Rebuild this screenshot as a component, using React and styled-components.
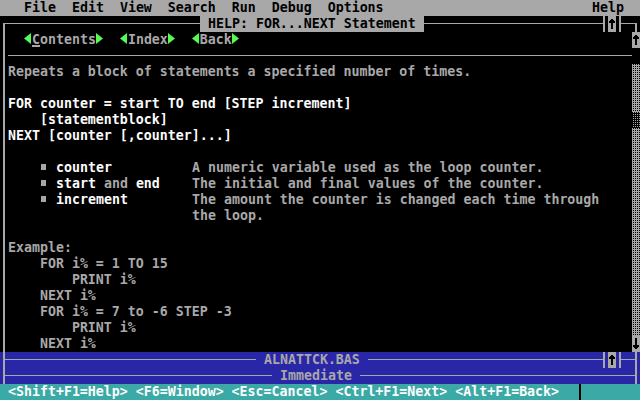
import React from 'react';
import styled, { createGlobalStyle } from 'styled-components';

const GRAY = '#a8a8a8';
const WHITE = '#fcfcfc';
const GREEN = '#54fc54';
const BLUE = '#2a26a8';
const TEAL = '#3ba9a6';

const GlobalStyle = createGlobalStyle`
  html, body {
    margin: 0;
    padding: 0;
    background: #000;
  }
  body {
    font-family: "DejaVu Sans Mono", "Liberation Mono", monospace;
    font-size: 13.288px;
    font-weight: bold;
    line-height: 16px;
  }
`;

// one line segment of a box-drawing character inside an 8x16 cell
const seg = (c, x, y, w, h) => `linear-gradient(${c}, ${c}) ${x}px ${y}px / ${w}px ${h}px no-repeat`;

const boxLayers = ({ $u, $d, $l, $r, $c = GRAY }) => {
  const layers = [];
  if ($u) layers.push(seg($c, 3, 0, 2, 8));
  if ($d) layers.push(seg($c, 3, 7, 2, 9));
  if ($l) layers.push(seg($c, 0, 7, 5, 1));
  if ($r) layers.push(seg($c, 3, 7, 5, 1));
  return layers.length ? layers.join(', ') : 'none';
};

const Screen = styled.div`
  width: 640px;
  height: 400px;
  display: flex;
  flex-direction: column;
  background: #000;
  overflow: hidden;
`;

const MenuBar = styled.div`
  height: 16px;
  display: flex;
  justify-content: space-between;
  padding: 0 16px 0 24px;
  background: ${GRAY};
  color: #000;
`;

const MenuGroup = styled.div`
  display: flex;
  gap: 16px;
`;

const Row = styled.div`
  height: 16px;
  display: flex;
  flex-shrink: 0;
  background: ${p => p.$bg || 'transparent'};
  color: ${p => p.$fg || GRAY};
  white-space: pre;
`;

const BoxCell = styled.div`
  width: 8px;
  height: 16px;
  flex-shrink: 0;
  background: ${boxLayers};
`;

const HLine = styled.div`
  height: 16px;
  flex: ${p => (p.$w ? `0 0 ${p.$w}px` : '1')};
  background: ${seg(GRAY, 0, 7, '100%', 1).replace('100%px', '100%')};
`;

const Title = styled.span`
  white-space: pre;
  background: ${p => (p.$active ? GRAY : 'transparent')};
  color: ${p => (p.$active ? '#000' : GRAY)};
`;

const ArrowCell = styled.div`
  width: 8px;
  height: 16px;
  flex-shrink: 0;
  background: ${GRAY};
  svg {
    display: block;
  }
`;

const HelpWindow = styled.div`
  display: flex;
  flex-direction: column;
  height: 336px;
`;

const Body = styled.div`
  flex: 1;
  display: flex;
`;

const Edge = styled.div`
  width: 8px;
  background: linear-gradient(${GRAY}, ${GRAY}) 3px 0 / 2px 100% no-repeat;
`;

const Content = styled.div`
  flex: 1;
  display: flex;
  flex-direction: column;
`;

const Nav = styled.div`
  height: 16px;
  display: flex;
  gap: 16px;
  padding-left: 16px;
`;

const NavLink = styled.span`
  display: flex;
  color: ${GRAY};
  svg {
    display: block;
  }
`;

const Cursor = styled.span`
  background: linear-gradient(${GRAY}, ${GRAY}) 0 13px / 100% 2px no-repeat;
`;

const Line = styled.div`
  height: 16px;
  white-space: pre;
  color: ${p => (p.$bright ? WHITE : GRAY)};
`;

const Hi = styled.span`
  color: ${WHITE};
`;

const Term = styled.div`
  height: 16px;
  display: grid;
  grid-template-columns: 48px 136px 1fr;
  white-space: pre;
  color: ${GRAY};
`;

const Bullet = styled.span`
  background: ${p => (p.$on ? seg(GRAY, 33, 4, 5, 6) : 'none')};
`;

const ScrollBar = styled.div`
  width: 8px;
  display: flex;
  flex-direction: column;
`;

const Blank = styled.div`
  height: 16px;
`;

const Track = styled.div`
  height: ${p => p.$rows * 16}px;
  background: conic-gradient(#000 0 25%, ${GRAY} 0) 0 0 / 2px 2px;
`;

const Thumb = styled.div`
  height: 16px;
  background: conic-gradient(${GRAY} 0 25%, #000 0) 0 0 / 2px 2px;
`;

const StatusText = styled.span`
  width: 576px;
  white-space: pre;
`;

const Up = () => (
  <svg width="8" height="16" viewBox="0 0 8 16" shapeRendering="crispEdges">
    <path d="M3 3H5V4H6V5H7V7H5V13H3V7H1V5H2V4H3Z" fill="#000" />
  </svg>
);

const Down = () => (
  <svg width="8" height="16" viewBox="0 0 8 16" shapeRendering="crispEdges">
    <path d="M3 2H5V9H7V11H6V12H5V13H3V12H2V11H1V9H3Z" fill="#000" />
  </svg>
);

const TriLeft = () => (
  <svg width="8" height="16" viewBox="0 0 8 16">
    <polygon points="0,6.5 7,1 7,12" fill={GREEN} />
  </svg>
);

const TriRight = () => (
  <svg width="8" height="16" viewBox="0 0 8 16">
    <polygon points="0,1 7,6.5 0,12" fill={GREEN} />
  </svg>
);

const terms = [
  { on: true, name: <Hi>counter</Hi>, desc: 'A numeric variable used as the loop counter.' },
  { on: true, name: <><Hi>start</Hi> and <Hi>end</Hi></>, desc: 'The initial and final values of the counter.' },
  { on: true, name: <Hi>increment</Hi>, desc: 'The amount the counter is changed each time through' },
  { on: false, name: '', desc: 'the loop.' },
];

const example = [
  '    FOR i% = 1 TO 15',
  '        PRINT i%',
  '    NEXT i%',
  '    FOR i% = 7 to -6 STEP -3',
  '        PRINT i%',
  '    NEXT i%',
];

export default function App() {
  return (
    <Screen>
      <GlobalStyle />
      <MenuBar>
        <MenuGroup>
          <span>File</span>
          <span>Edit</span>
          <span>View</span>
          <span>Search</span>
          <span>Run</span>
          <span>Debug</span>
          <span>Options</span>
        </MenuGroup>
        <span>Help</span>
      </MenuBar>

      <HelpWindow>
        <Row>
          <BoxCell $d $r />
          <HLine $w={192} />
          <Title $active> HELP: FOR...NEXT Statement </Title>
          <HLine />
          <BoxCell $u $d $l />
          <ArrowCell><Up /></ArrowCell>
          <BoxCell $u $d $r />
          <HLine $w={8} />
          <BoxCell $d $l />
        </Row>
        <Body>
          <Edge />
          <Content>
            <Nav>
              <NavLink><TriLeft /><Cursor>C</Cursor>ontents<TriRight /></NavLink>
              <NavLink><TriLeft />Index<TriRight /></NavLink>
              <NavLink><TriLeft />Back<TriRight /></NavLink>
            </Nav>
            <HLine />
            <Line>Repeats a block of statements a specified number of times.</Line>
            <Line />
            <Line $bright>FOR counter = start TO end [STEP increment]</Line>
            <Line $bright>    [statementblock]</Line>
            <Line $bright>NEXT [counter [,counter]...]</Line>
            <Line />
            {terms.map((t, i) => (
              <Term key={i}>
                <Bullet $on={t.on} />
                <span>{t.name}</span>
                <span>{t.desc}</span>
              </Term>
            ))}
            <Line />
            <Line>Example:</Line>
            {example.map((l, i) => (
              <Line key={i}>{l}</Line>
            ))}
          </Content>
          <ScrollBar>
            <ArrowCell><Up /></ArrowCell>
            <Blank />
            <Track $rows={3} />
            <Thumb />
            <Track $rows={13} />
            <ArrowCell><Down /></ArrowCell>
          </ScrollBar>
        </Body>
      </HelpWindow>

      <Row $bg={BLUE}>
        <BoxCell $u $d $r />
        <HLine $w={248} />
        <Title> ALNATTCK.BAS </Title>
        <HLine />
        <BoxCell $u $d $l />
        <ArrowCell><Up /></ArrowCell>
        <BoxCell $u $d $r />
        <HLine $w={8} />
        <BoxCell $u $d $l />
      </Row>
      <Row $bg={BLUE}>
        <BoxCell $u $d $r />
        <HLine $w={264} />
        <Title> Immediate </Title>
        <HLine />
        <BoxCell $u $d $l />
      </Row>

      <Row $bg={TEAL} $fg={WHITE}>
        <StatusText> &lt;Shift+F1=Help&gt; &lt;F6=Window&gt; &lt;Esc=Cancel&gt; &lt;Ctrl+F1=Next&gt; &lt;Alt+F1=Back&gt;</StatusText>
        <BoxCell $u $d $c="#000" />
      </Row>
    </Screen>
  );
}
